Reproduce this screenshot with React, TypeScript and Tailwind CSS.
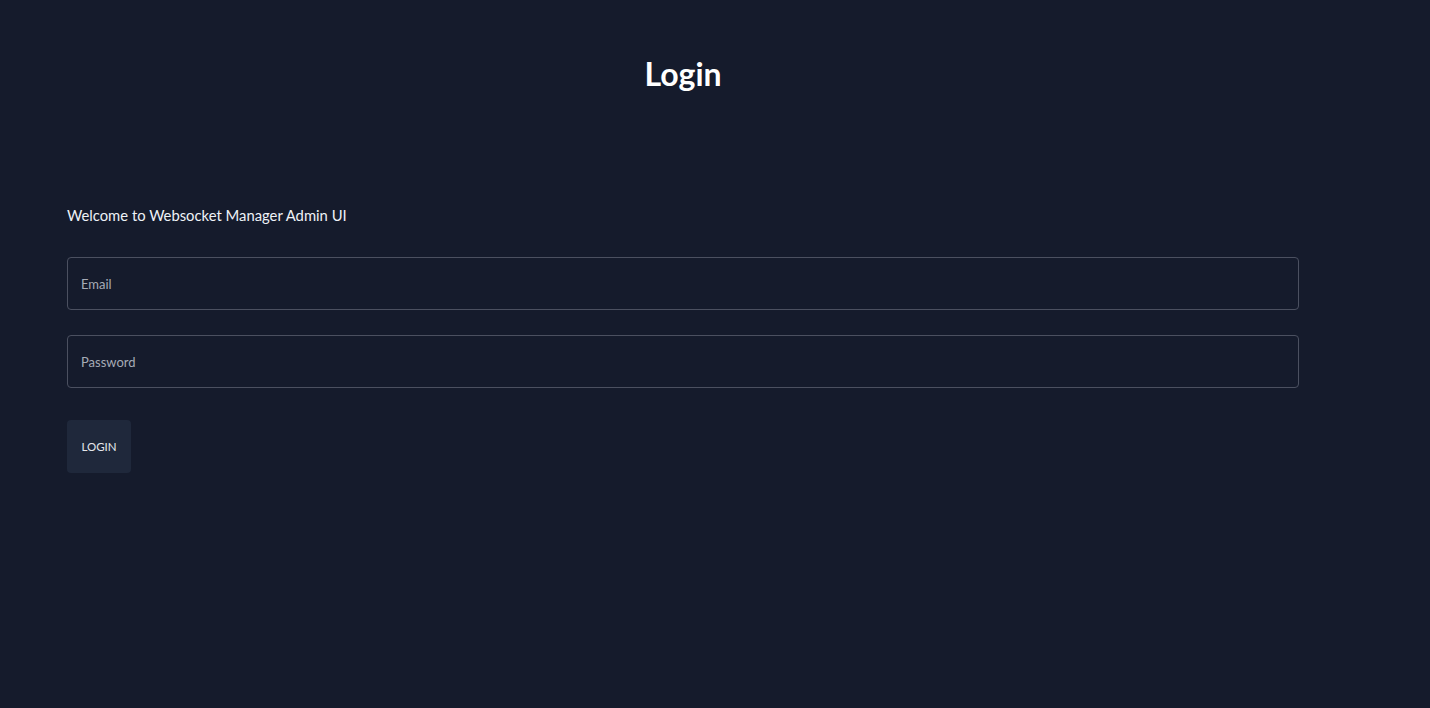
export default function App() {
  return (
    <div className="min-h-[708px] w-full bg-[#151b2c] font-['Lato',sans-serif] text-white">
      <div className="w-[1366px] px-[67px]">
        <h1 className="pt-[55px] text-center text-[32px] font-bold leading-[38px]">Login</h1>

        <p className="mt-[110px] text-[14.8px] leading-[24px] text-[#eef2f7]">
          Welcome to Websocket Manager Admin UI
        </p>

        <form className="mt-[30px] flex flex-col gap-[25px]" onSubmit={(e) => e.preventDefault()}>
          <input
            type="email"
            placeholder="Email"
            className="h-[53px] w-full rounded-[4px] border border-[#4b5060] bg-transparent px-[13px] text-[13px] text-white outline-none placeholder:text-[#a6abb6]"
          />
          <input
            type="password"
            placeholder="Password"
            className="h-[53px] w-full rounded-[4px] border border-[#4b5060] bg-transparent px-[13px] text-[13px] text-white outline-none placeholder:text-[#a6abb6]"
          />
          <div className="pt-[7px]">
            <button
              type="submit"
              className="h-[53px] w-[64px] rounded-[4px] bg-[#1f283b] text-[11.5px] text-[#e5e7eb]"
            >
              LOGIN
            </button>
          </div>
        </form>
      </div>
    </div>
  );
}
